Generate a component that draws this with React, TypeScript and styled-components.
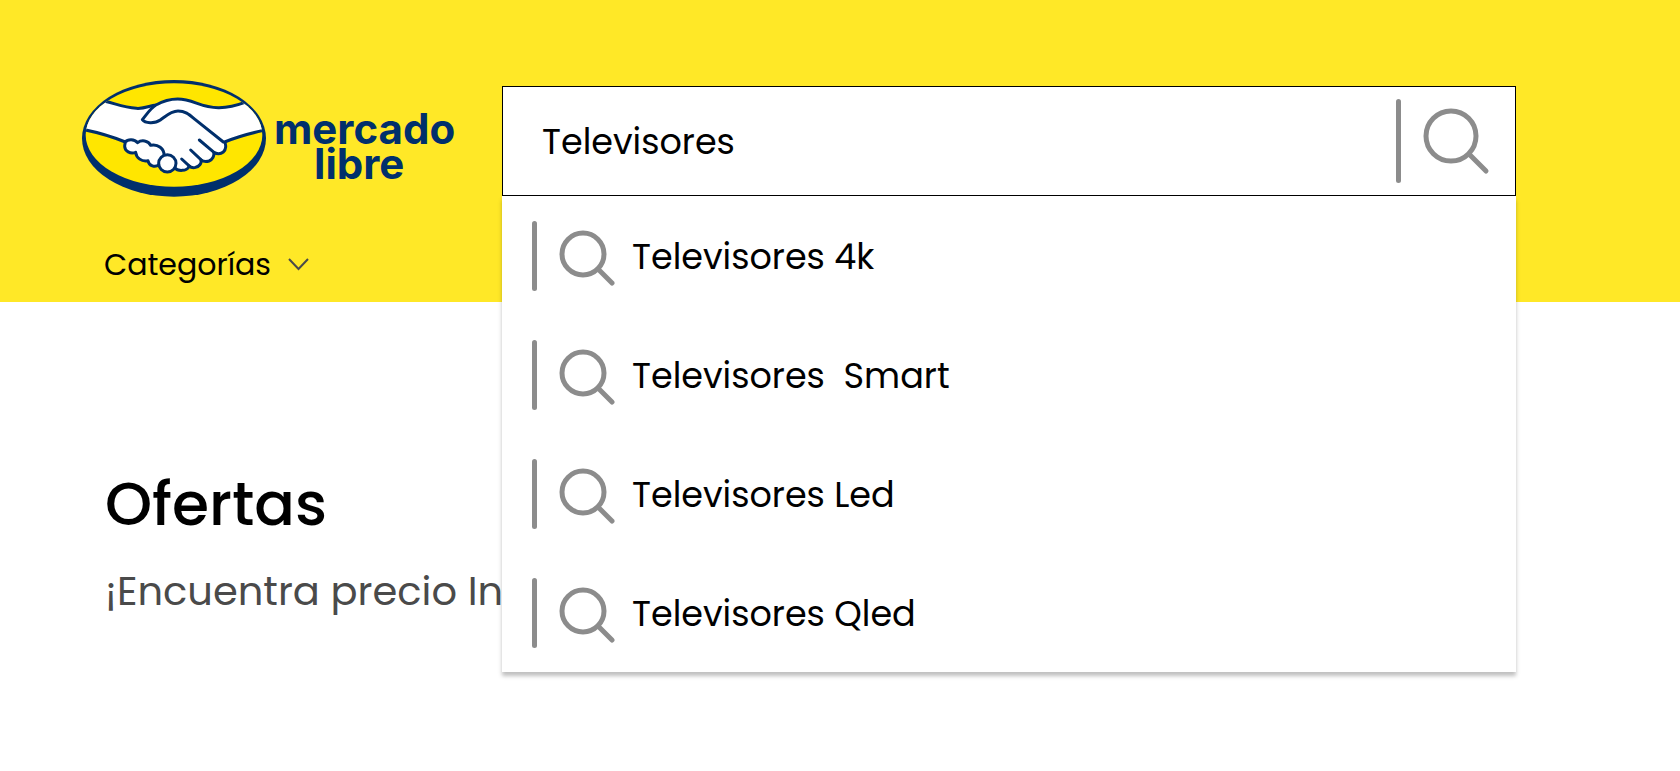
import React, { useState } from "react";
import styled, { createGlobalStyle } from "styled-components";

const GlobalStyle = createGlobalStyle`
  *, *::before, *::after { box-sizing: border-box; }
  body {
    margin: 0;
    background: #ffffff;
    color: #000000;
    font-family: Poppins, Inter, "Liberation Sans", sans-serif;
  }
  button, input { font: inherit; color: inherit; }
`;

const Page = styled.div`
  min-height: 100vh;
`;

const Header = styled.header`
  background: #ffe827;
  padding: 80px 164px 15px 82px;
`;

const TopRow = styled.div`
  display: flex;
  align-items: flex-start;
`;

const Brand = styled.a`
  flex: 0 0 420px;
  display: flex;
  gap: 8px;
  color: #002f6c;
  text-decoration: none;
`;

const Emblem = styled.svg`
  flex: none;
  width: 184px;
  height: 117px;
`;

const WordMark = styled.span`
  display: flex;
  flex-direction: column;
  padding-top: 31px;
  font-family: Inter, sans-serif;
  font-size: 42px;
  font-weight: 700;
  line-height: 35px;
`;

const WordMarkLower = styled.span`
  padding-left: 40px;
`;

const Search = styled.form`
  position: relative;
  flex: 1;
  min-width: 0;
  margin-top: 6px;
`;

const SearchField = styled.div`
  display: flex;
  align-items: center;
  height: 110px;
  padding: 0 24px 0 39px;
  background: #ffffff;
  border: 1px solid #000000;
`;

const SearchInput = styled.input`
  flex: 1;
  min-width: 0;
  padding: 2px 0 0;
  border: 0;
  outline: 0;
  background: transparent;
  font-size: 35px;
  line-height: 54px;
`;

const SearchButton = styled.button`
  display: flex;
  align-items: center;
  gap: 20px;
  padding: 0;
  border: 0;
  background: transparent;
  cursor: pointer;
`;

const Bar = styled.span<{ $height: number }>`
  flex: none;
  width: 5px;
  height: ${({ $height }) => $height}px;
  border-radius: 3px;
  background: #8c8c8c;
`;

const Lens = styled.svg<{ $size: number }>`
  flex: none;
  width: ${({ $size }) => $size}px;
  height: ${({ $size }) => $size}px;
  fill: none;
  stroke: #8c8c8c;
  stroke-width: 5;
  stroke-linecap: round;
`;

const Suggestions = styled.ul`
  position: absolute;
  top: 100%;
  left: 0;
  right: 0;
  z-index: 1;
  margin: 0;
  padding: 0;
  list-style: none;
  background: #ffffff;
  box-shadow: 0 4px 4px rgba(0, 0, 0, 0.25);
`;

const Suggestion = styled.button`
  display: flex;
  align-items: center;
  width: 100%;
  height: 119px;
  padding: 0 30px;
  border: 0;
  background: transparent;
  font-size: 35px;
  line-height: 54px;
  text-align: left;
  white-space: pre;
  cursor: pointer;

  ${Lens} { margin: 0 13px 0 22px; }
`;

const SuggestionText = styled.span`
  padding-top: 2px;
`;

const Nav = styled.nav`
  padding: 45px 0 0 22px;
`;

const NavButton = styled.button`
  display: flex;
  align-items: center;
  gap: 17px;
  padding: 0;
  border: 0;
  background: transparent;
  font-size: 30px;
  line-height: 45px;
  cursor: pointer;
`;

const Chevron = styled.svg`
  width: 21px;
  height: 13px;
  fill: none;
  stroke: #4a4a4a;
  stroke-width: 2;
`;

const Offers = styled.main`
  padding: 157px 105px 0;
`;

const Title = styled.h1`
  margin: 0;
  font-size: 60px;
  font-weight: 500;
  line-height: 90px;
`;

const Subtitle = styled.p`
  margin: 12px 0 0;
  color: #4a4a4a;
  font-size: 40px;
  line-height: 60px;
`;

const HandshakeEmblem = () => (
  <Emblem viewBox="35 30 552 351" aria-hidden="true">
    <defs>
      <clipPath id="oval">
        <ellipse cx="311" cy="195" rx="265" ry="155" />
      </clipPath>
    </defs>
    <ellipse cx="311" cy="205" rx="276" ry="175" fill="#002f6c" />
    <ellipse cx="311" cy="195" rx="265" ry="155" fill="#ffe600" />
    <g clipPath="url(#oval)" stroke="#002f6c" strokeWidth="9" strokeLinejoin="round" strokeLinecap="round">
      <path
        fill="#fff"
        d="M30 80 L104 94 C135 101 160 112 198 115 C222 117 238 107 257 105 C280 92 298 87 322 87 C370 87 390 114 446 113 C480 112 505 104 524 97 L600 80 L600 177 C550 187 510 197 463 216 C468 224 467 240 459 246 C450 253 438 251 430 247 C433 257 426 269 416 273 C407 276 398 274 392 270 C394 281 386 290 376 292 C369 294 361 292 356 288 C354 297 344 301 336 301 C327 302 317 298 311 292 L250 262 L165 216 C130 202 90 188 30 177 Z"
      />
      <path
        fill="#fff"
        stroke="none"
        d="M160 200 L216 203 L300 235 L322 272 L290 270 L200 240Z"
      />
      <path
        fill="#fff"
        d="M281 257 L266 284 C254 294 236 288 233 272 C214 276 198 264 196 247 C180 253 163 243 163 229 C163 222 165 219 165 216 C172 207 192 206 202 218 C213 209 234 211 241 226 C262 221 283 236 281 257 Z"
      />
      <circle cx="291" cy="280" r="26" fill="#fff" />
      <path
        fill="#fff"
        d="M257 105 C242 113 229 133 216 149 C224 160 253 162 270 150 C288 137 302 123 323 123 C345 123 357 134 374 148 L459 216"
      />
      <path fill="none" d="M387 210 L431 247 M361 240 L394 271 M334 267 L358 289" />
    </g>
  </Emblem>
);

const suggestions = ["Televisores 4k", "Televisores  Smart", "Televisores Led", "Televisores Qled"];

export default function App() {
  const [query, setQuery] = useState("Televisores");

  return (
    <Page>
      <GlobalStyle />
      <Header>
        <TopRow>
          <Brand href="#" aria-label="mercado libre">
            <HandshakeEmblem />
            <WordMark>
              <span>mercado</span>
              <WordMarkLower>libre</WordMarkLower>
            </WordMark>
          </Brand>
          <Search role="search" onSubmit={(event) => event.preventDefault()}>
            <SearchField>
              <SearchInput
                aria-label="Buscar productos"
                value={query}
                onChange={(event) => setQuery(event.target.value)}
              />
              <SearchButton type="submit" aria-label="Buscar">
                <Bar $height={84} />
                <Lens $size={70} viewBox="0 0 70 70">
                  <circle cx="30" cy="30" r="25" />
                  <path d="M48 48 L65 65" />
                </Lens>
              </SearchButton>
            </SearchField>
            <Suggestions>
              {suggestions.map((text) => (
                <li key={text}>
                  <Suggestion type="button" onClick={() => setQuery(text)}>
                    <Bar $height={70} />
                    <Lens $size={60} viewBox="0 0 60 60">
                      <circle cx="24" cy="28" r="21" />
                      <path d="M39 43 L53 57" />
                    </Lens>
                    <SuggestionText>{text}</SuggestionText>
                  </Suggestion>
                </li>
              ))}
            </Suggestions>
          </Search>
        </TopRow>
        <Nav>
          <NavButton type="button">
            Categorías
            <Chevron viewBox="0 0 21 13" aria-hidden="true">
              <path d="M1 1 L10.5 11 L20 1" />
            </Chevron>
          </NavButton>
        </Nav>
      </Header>
      <Offers>
        <Title>Ofertas</Title>
        <Subtitle>¡Encuentra precio In</Subtitle>
      </Offers>
    </Page>
  );
}
